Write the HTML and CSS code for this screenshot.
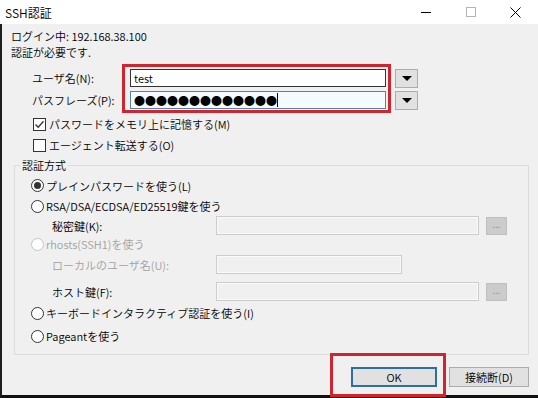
FILE: index.html
```html
<!DOCTYPE html>
<html lang="ja">
<head>
    <meta charset="UTF-8">
    <title>SSH認証</title>
    <link rel="stylesheet" href="styles.css">
</head>
<body>
<div class="window">
    <!-- タイトルバー -->
    <div class="titlebar">
        <span class="title">SSH認証</span>
        <div class="controls">
            <div class="ctl"><svg width="10" height="10" viewBox="0 0 10 10"><path d="M0 5.5h10" stroke="#000" stroke-width="1"/></svg></div>
            <div class="ctl"><svg width="10" height="10" viewBox="0 0 10 10"><rect x="0.5" y="0.5" width="9" height="9" fill="none" stroke="#b4b4b4"/></svg></div>
            <div class="ctl"><svg width="11" height="11" viewBox="0 0 11 11"><path d="M0.5 0.5L10.5 10.5M10.5 0.5L0.5 10.5" stroke="#000" stroke-width="1"/></svg></div>
        </div>
    </div>

    <div class="frame">
        <div class="info">ログイン中: 192.168.38.100</div>
        <div class="info">認証が必要です.</div>

        <div class="field field-user">
            <label>ユーザ名(N):</label>
            <div class="textbox">test</div>
            <div class="drop"><span class="tri"></span></div>
        </div>
        <div class="field field-pass">
            <label>パスフレーズ(P):</label>
            <div class="textbox textbox-focus"><span class="dots">●●●●●●●●●●●●●</span><span class="caret"></span></div>
            <div class="drop"><span class="tri"></span></div>
        </div>

        <div class="check check-remember">
            <span class="box"><svg width="11" height="11" viewBox="0 0 11 11"><path d="M1.5 5.5L4.2 8.3L9.5 2.2" fill="none" stroke="#333" stroke-width="1.3"/></svg></span>
            <span>パスワードをメモリ上に記憶する(M)</span>
        </div>
        <div class="check check-agent">
            <span class="box"></span>
            <span>エージェント転送する(O)</span>
        </div>

        <fieldset class="group">
            <legend>認証方式</legend>
            <div class="group-body">
                <div class="radio radio-first"><span class="circle on"></span><span>プレインパスワードを使う(L)</span></div>
                <div class="radio"><span class="circle"></span><span>RSA/DSA/ECDSA/ED25519鍵を使う</span></div>
                <div class="subfield">
                    <label>秘密鍵(K):</label>
                    <div class="textbox-off wide"></div>
                    <div class="browse">...</div>
                </div>
                <div class="radio radio-rhosts disabled"><span class="circle"></span><span>rhosts(SSH1)を使う</span></div>
                <div class="subfield subfield-local disabled">
                    <label>ローカルのユーザ名(U):</label>
                    <div class="textbox-off narrow"></div>
                </div>
                <div class="subfield subfield-host">
                    <label>ホスト鍵(F):</label>
                    <div class="textbox-off wide"></div>
                    <div class="browse">...</div>
                </div>
                <div class="radio radio-kbd"><span class="circle"></span><span>キーボードインタラクティブ認証を使う(I)</span></div>
                <div class="radio radio-pageant"><span class="circle"></span><span>Pageantを使う</span></div>
            </div>
        </fieldset>

        <div class="footer">
            <div class="button button-default">OK</div>
            <div class="button button-cancel">接続断(D)</div>
        </div>
    </div>

    <!-- 注釈の赤枠 -->
    <div class="mark mark-login"></div>
    <div class="mark mark-ok"></div>
</div>
</body>
</html>
```

FILE: styles.css
```css
/*初期化*/
body{
    margin: 0;
    font-family: "Noto Sans CJK JP", "Noto Sans", sans-serif;
    font-size: 11px;
    font-weight: 350;
    color: #000;
    background: #f0f0f0;
}

/*ウィンドウ*/
.window{
    position: relative;
    width: 538px;
    height: 398px;
    overflow: hidden;
}

.titlebar{
    height: 24px;
    background: #fff;
    display: flex;
    align-items: center;
}
.title{
    padding-left: 5px;
    font-size: 12px;
}
.controls{
    margin-left: auto;
    display: flex;
    height: 24px;
}
.ctl{
    width: 45px;
    display: flex;
    align-items: center;
    justify-content: center;
}

.frame{
    height: 374px;
    box-sizing: border-box;
    border-left: 2px solid #1e1e1e;
    border-bottom: 3px solid #111;
    padding-top: 4px;
}

.info{
    line-height: 16px;
    padding-left: 9px;
}

/*ユーザ名・パスフレーズ*/
.field{
    display: flex;
    align-items: center;
    height: 18px;
    padding-left: 30px;
}
.field-user{ margin-top: 9px; }
.field-pass{ margin-top: 4px; }
.field label{ width: 98px; }

.textbox{
    width: 256px;
    height: 18px;
    box-sizing: border-box;
    border: 1px solid #333;
    background: #fff;
    padding-left: 3px;
    display: flex;
    align-items: center;
}
.textbox-focus{
    border-color: #5283a8;
    background: #f4fbff;
}
.dots{
    font-size: 11px;
    line-height: 14px;
}
.caret{
    width: 1px;
    height: 14px;
    background: #000;
}

.drop{
    margin-left: 9px;
    width: 23px;
    height: 19px;
    box-sizing: border-box;
    border: 1px solid #adadad;
    background: #e1e1e1;
    display: flex;
    align-items: center;
    justify-content: center;
}
.tri{
    width: 0;
    height: 0;
    border-left: 5px solid transparent;
    border-right: 5px solid transparent;
    border-top: 5px solid #000;
}

/*チェックボックス*/
.check{
    display: flex;
    align-items: center;
    height: 16px;
    padding-left: 31px;
}
.check-remember{ margin-top: 7px; }
.check-agent{ margin-top: 5px; }
.box{
    width: 13px;
    height: 13px;
    box-sizing: border-box;
    border: 1px solid #333;
    background: #fff;
    margin-right: 3px;
    display: flex;
    align-items: center;
    justify-content: center;
}

/*認証方式*/
.group{
    margin: 5px 0 0 12px;
    width: 515px;
    box-sizing: border-box;
    border: 1px solid #dcdcdc;
    padding: 3px 0 8px 0;
    min-width: 0;
}
.group legend{
    margin-left: 5px;
    padding: 0 2px;
    line-height: 14px;
}
.group-body{
    padding-left: 16px;
}

.radio{
    display: flex;
    align-items: center;
    height: 20px;
}
.radio-first{ height: 21px; }
.radio-rhosts{ height: 18px; }
.radio-kbd{ margin-top: 2px; }
.radio-pageant{ margin-top: 3px; }
.circle{
    width: 13px;
    height: 13px;
    box-sizing: border-box;
    border: 1px solid #333;
    border-radius: 50%;
    background: #fff;
    margin-right: 2px;
    display: flex;
    align-items: center;
    justify-content: center;
}
.circle.on::after{
    content: "";
    width: 7px;
    height: 7px;
    border-radius: 50%;
    background: #333;
}
.disabled{ color: #a0a0a0; }
.disabled .circle{ border-color: #c4c4c4; }

.subfield{
    display: flex;
    align-items: center;
    height: 19px;
    padding-left: 21px;
}
.subfield label{ width: 164px; }
.subfield-local{ margin-top: 2px; }
.subfield-host{ margin-top: 8px; }

.textbox-off{
    height: 19px;
    box-sizing: border-box;
    border: 1px solid #cccccc;
    box-shadow: inset 0 0 0 1px #fafafa;
    background: #f0f0f0;
}
.wide{ width: 263px; }
.narrow{ width: 186px; }

.browse{
    margin-left: 7px;
    width: 21px;
    height: 18px;
    box-sizing: border-box;
    border: 1px solid #bfbfbf;
    background: #cccccc;
    color: #8c8c8c;
    font-size: 9px;
    line-height: 14px;
    text-align: center;
}

/*下のボタン*/
.footer{
    display: flex;
    justify-content: flex-end;
    gap: 12px;
    margin-top: 12px;
    padding-right: 9px;
}
.button{
    height: 20px;
    box-sizing: border-box;
    background: #e1e1e1;
    border: 1px solid #adadad;
    display: flex;
    align-items: center;
    justify-content: center;
}
.button-default{
    width: 86px;
    border: 2px solid #2f6ea3;
}
.button-cancel{
    width: 80px;
}

/*赤枠（注釈）*/
.mark{
    position: absolute;
    box-sizing: border-box;
    border: 3px solid #cf2530;
}
.mark-login{
    left: 122px;
    top: 64px;
    width: 269px;
    height: 49px;
}
.mark-ok{
    left: 330px;
    top: 353px;
    width: 116px;
    height: 44px;
}
```
